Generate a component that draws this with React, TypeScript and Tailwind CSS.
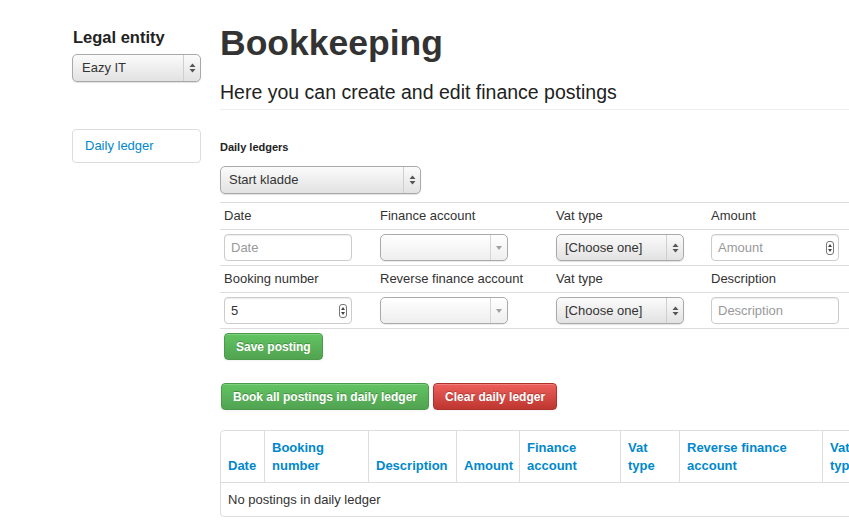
import React from "react";

function UpDown() {
  return (
    <svg width="7" height="10" viewBox="0 0 7 10">
      <path d="M0.5 4 L3.5 0.5 L6.5 4 Z" fill="#555" />
      <path d="M0.5 6 L3.5 9.5 L6.5 6 Z" fill="#555" />
    </svg>
  );
}

function MacSelect({ label, className, padClass }: { label: string; className: string; padClass: string }) {
  return (
    <div
      className={
        "flex items-center rounded-[5px] border border-[#a9a9a9] bg-[linear-gradient(to_bottom,#fbfbfb,#e2e2e2)] shadow-[0_1px_1px_rgba(0,0,0,0.12)] text-[13px] text-[#333] " +
        className
      }
    >
      <span className={"flex-1 truncate " + padClass}>{label}</span>
      <div className="flex h-full w-[17px] items-center justify-center border-l border-[#cfcfcf]">
        <UpDown />
      </div>
    </div>
  );
}

function ChosenSelect() {
  return (
    <div className="flex h-[27px] w-[128px] items-center rounded-[5px] border border-[#aaaaaa] bg-[linear-gradient(to_bottom,#ffffff,#eeeeee)] shadow-[0_1px_1px_rgba(0,0,0,0.08)]">
      <span className="flex-1" />
      <div className="flex h-full w-[17px] items-center justify-center border-l border-[#d5d5d5]">
        <svg width="6" height="4" viewBox="0 0 6 4">
          <path d="M0 0 L6 0 L3 4 Z" fill="#a0a0a0" />
        </svg>
      </div>
    </div>
  );
}

function Spinner() {
  return (
    <div className="flex h-[14px] w-[8px] flex-col items-center justify-center gap-[2px] rounded-[3px] border border-[#777]">
      <svg width="4" height="3" viewBox="0 0 4 3">
        <path d="M0 3 L2 0 L4 3 Z" fill="#444" />
      </svg>
      <svg width="4" height="3" viewBox="0 0 4 3">
        <path d="M0 0 L2 3 L4 0 Z" fill="#444" />
      </svg>
    </div>
  );
}

function TextInput({ placeholder, value, spinner }: { placeholder?: string; value?: string; spinner?: boolean }) {
  return (
    <div className="flex h-[27px] w-[128px] items-center rounded-[4px] border border-[#cccccc] bg-white pl-[6px] pr-[4px] text-[13px] shadow-[inset_0_1px_1px_rgba(0,0,0,0.075)]">
      <span className={"flex-1 " + (value ? "text-[#333]" : "text-[#999]")}>{value ?? placeholder}</span>
      {spinner && <Spinner />}
    </div>
  );
}

function Btn({ children, color }: { children: React.ReactNode; color: "green" | "red" }) {
  const cls =
    color === "green"
      ? "bg-[linear-gradient(to_bottom,#62c462,#51a351)] border-[#4a9a4a] "
      : "bg-[linear-gradient(to_bottom,#ee5f5b,#bd362f)] border-[#ad322c] ";
  return (
    <div
      className={
        cls +
        "flex h-[27px] items-center rounded-[4px] border px-[11px] text-[12px] font-bold leading-[18px] text-white shadow-[inset_0_1px_0_rgba(255,255,255,0.2),0_1px_2px_rgba(0,0,0,0.05)] [text-shadow:0_-1px_0_rgba(0,0,0,0.25)]"
      }
    >
      {children}
    </div>
  );
}

const cell = "px-[4px] py-[4px] leading-[18px]";

export default function App() {
  return (
    <div
      className="w-full overflow-hidden bg-white text-[13px] text-[#333]"
      style={{ fontFamily: '"Liberation Sans", Arial, sans-serif', minHeight: 526 }}
    >
      <div className="flex w-[1100px] pl-[72px]">
        {/* Sidebar */}
        <div className="w-[129px] shrink-0 pt-[27px]">
          <h3 className="pl-[1px] text-[16.5px] font-bold leading-[20px] text-[#222]">Legal entity</h3>
          <MacSelect label="Eazy IT" className="mt-[7px] h-[28px] w-[129px]" padClass="pl-[9px]" />
          <div className="mt-[47px] flex h-[34px] items-center rounded-[4px] border border-[#dddddd] px-[12px] text-[13px] text-[#0088cc]">
            Daily ledger
          </div>
        </div>

        {/* Main */}
        <div className="ml-[19px] w-[780px] shrink-0">
          <div className="border-b border-[#eeeeee] pb-[5px] pt-[25px]">
            <h1 className="text-[35.5px] font-bold leading-[36px] text-[#333]">Bookkeeping</h1>
            <p className="mt-[19px] text-[19.5px] leading-[24px] text-[#222]">
              Here you can create and edit finance postings
            </p>
          </div>

          <div className="mt-[30px] text-[11px] font-bold leading-[14px] text-[#222]">Daily ledgers</div>
          <MacSelect label="Start kladde" className="mt-[12px] h-[28px] w-[201px]" padClass="pl-[8px]" />

          {/* Form table */}
          <div className="mt-[8px] grid grid-cols-[156px_176px_155px_1fr]">
            <div className={cell + " border-t border-[#dddddd]"}>Date</div>
            <div className={cell + " border-t border-[#dddddd]"}>Finance account</div>
            <div className={cell + " border-t border-[#dddddd]"}>Vat type</div>
            <div className={cell + " border-t border-[#dddddd]"}>Amount</div>

            <div className={cell + " border-t border-[#dddddd]"}>
              <TextInput placeholder="Date" />
            </div>
            <div className={cell + " border-t border-[#dddddd]"}>
              <ChosenSelect />
            </div>
            <div className={cell + " border-t border-[#dddddd]"}>
              <MacSelect label="[Choose one]" className="h-[27px] w-[128px]" padClass="pl-[8px]" />
            </div>
            <div className={cell + " border-t border-[#dddddd]"}>
              <TextInput placeholder="Amount" spinner />
            </div>

            <div className={cell + " border-t border-[#dddddd]"}>Booking number</div>
            <div className={cell + " border-t border-[#dddddd]"}>Reverse finance account</div>
            <div className={cell + " border-t border-[#dddddd]"}>Vat type</div>
            <div className={cell + " border-t border-[#dddddd]"}>Description</div>

            <div className={cell + " border-t border-[#dddddd]"}>
              <TextInput value="5" spinner />
            </div>
            <div className={cell + " border-t border-[#dddddd]"}>
              <ChosenSelect />
            </div>
            <div className={cell + " border-t border-[#dddddd]"}>
              <MacSelect label="[Choose one]" className="h-[27px] w-[128px]" padClass="pl-[8px]" />
            </div>
            <div className={cell + " border-t border-[#dddddd]"}>
              <TextInput placeholder="Description" />
            </div>

            <div className={cell + " col-span-4 flex border-t border-[#dddddd]"}>
              <Btn color="green">Save posting</Btn>
            </div>
          </div>

          <div className="ml-[1px] mt-[19px] flex gap-[4px]">
            <Btn color="green">Book all postings in daily ledger</Btn>
            <Btn color="red">Clear daily ledger</Btn>
          </div>

          {/* Postings table */}
          <div className="mt-[20px] overflow-hidden rounded-[4px] border border-[#dddddd]">
            <div className="grid grid-cols-[43px_104px_88px_63px_101px_59px_143px_70px_1fr] text-[13px] font-bold leading-[18px] text-[#0088cc]">
              {[
                ["Date"],
                ["Booking", "number"],
                ["Description"],
                ["Amount"],
                ["Finance", "account"],
                ["Vat", "type"],
                ["Reverse finance", "account"],
                ["Vat", "type"],
                ["Description"],
              ].map((lines, i) => (
                <div
                  key={i}
                  className={
                    "flex h-[51px] flex-col justify-end whitespace-nowrap pb-[7px] pl-[7px] pt-[8px] " +
                    (i > 0 ? "border-l border-[#dddddd]" : "")
                  }
                >
                  {lines.map((l, j) => (
                    <span key={j}>{l}</span>
                  ))}
                </div>
              ))}
            </div>
            <div className="border-t border-[#dddddd] pb-[7px] pl-[7px] pt-[8px] leading-[18px] text-[#333]">
              No postings in daily ledger
            </div>
          </div>
          <div className="h-[10px]" />
        </div>
      </div>
    </div>
  );
}
